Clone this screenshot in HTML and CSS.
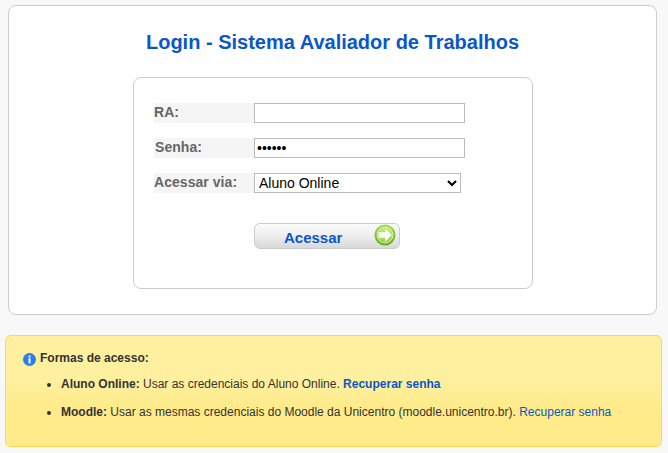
FILE: index.html
```html
<!DOCTYPE html>
<html lang="pt-BR">

<head>
    <meta charset="UTF-8">
    <title>Login - Sistema Avaliador de Trabalhos</title>
    <link rel="stylesheet" href="styles.css">
</head>

<body>

    <div class="login-card">
        <h1>Login - Sistema Avaliador de Trabalhos</h1>
        <form class="login-box">
            <div class="row">
                <label class="row-label" for="ra">RA:</label>
                <input type="text" id="ra" class="field">
            </div>
            <div class="row">
                <label class="row-label label-senha" for="senha">Senha:</label>
                <input type="password" id="senha" class="field" value="123456">
            </div>
            <div class="row">
                <label class="row-label" for="via">Acessar via:</label>
                <select id="via" class="field field-select">
                    <option>Aluno Online</option>
                    <option>Moodle</option>
                </select>
            </div>
            <button type="button" class="btn-acessar">
                <span class="btn-text">Acessar</span>
                <svg class="btn-icon" width="22" height="22" viewBox="0 0 22 22">
                    <defs>
                        <linearGradient id="ringGrad" x1="0" y1="0" x2="0" y2="1">
                            <stop offset="0" stop-color="#a6dc4a"/>
                            <stop offset="1" stop-color="#5fae1c"/>
                        </linearGradient>
                        <linearGradient id="coreGrad" x1="0" y1="0" x2="0" y2="1">
                            <stop offset="0" stop-color="#c4ec80"/>
                            <stop offset="1" stop-color="#96d13c"/>
                        </linearGradient>
                    </defs>
                    <circle cx="11" cy="11" r="10.5" fill="url(#ringGrad)"/>
                    <circle cx="11" cy="11" r="8" fill="url(#coreGrad)" stroke="#e8f7c8" stroke-width="0.8"/>
                    <path d="M4.5 8h6.5v-4l7 7-7 7v-4h-6.5z" fill="#fbfbf2" stroke="#b9c99a" stroke-width="0.4"/>
                </svg>
            </button>
        </form>
    </div>

    <div class="info-box">
        <p class="info-title">
            <svg class="info-icon" width="13" height="13" viewBox="0 0 13 13">
                <circle cx="6.5" cy="6.5" r="6.5" fill="#2b7de9"/>
                <rect x="5.5" y="5.4" width="2" height="5" fill="#fff"/>
                <rect x="5.5" y="2.6" width="2" height="1.9" fill="#fff"/>
            </svg>
            <strong>Formas de acesso:</strong>
        </p>
        <ul>
            <li><strong>Aluno Online:</strong> Usar as credenciais do Aluno Online. <a class="link-bold" href="#">Recuperar senha</a></li>
            <li><strong>Moodle:</strong> Usar as mesmas credenciais do Moodle da Unicentro (moodle.unicentro.br). <a href="#">Recuperar senha</a></li>
        </ul>
    </div>

</body>

</html>
```
FILE: styles.css
```css
body {
    margin: 0;
    padding: 5px 6px 0 5px;
    background-color: #f8f8f8;
    font-family: "Liberation Sans", Arial, sans-serif;
    color: #333;
}

.login-card {
    box-sizing: border-box;
    height: 310px;
    margin: 0 5px 20px 3px;
    padding-top: 22px;
    background-color: #fff;
    border: 1px solid #ccc;
    border-radius: 8px;
}

h1 {
    margin: 0 0 21px;
    font-size: 20px;
    line-height: 28px;
    text-align: center;
    color: #0b57c9;
}

.login-box {
    box-sizing: border-box;
    width: 400px;
    height: 212px;
    margin: 0 123px 0 124px;
    padding: 25px 20px 0;
    border: 1px solid #ccc;
    border-radius: 8px;
}

.row {
    display: flex;
    height: 20px;
    margin-bottom: 15px;
}

.row-label {
    box-sizing: border-box;
    width: 100px;
    height: 20px;
    background-color: #f5f5f5;
    font-size: 14px;
    font-weight: bold;
    line-height: 18px;
    letter-spacing: 0.05px;
    color: #666;
}

.label-senha {
    padding-left: 1px;
}

.field {
    box-sizing: border-box;
    width: 211px;
    height: 20px;
    padding: 1px 2px;
    background-color: #fff;
    border: 1px solid #bbb;
    border-radius: 0;
    font-family: "Liberation Sans", Arial, sans-serif;
    font-size: 14px;
    color: #000;
}

.field-select {
    width: 207px;
    padding: 0;
}

.btn-acessar {
    display: flex;
    align-items: center;
    box-sizing: border-box;
    width: 146px;
    height: 26px;
    margin: 30px 0 0 100px;
    padding: 0 3px 0 29px;
    background: linear-gradient(to bottom, #fbfbfb 0%, #f0f0f0 45%, #d8d8d8 100%);
    border: 1px solid #ccc;
    border-radius: 6px;
    cursor: pointer;
}

.btn-text {
    flex: 1;
    padding-top: 2px;
    text-align: left;
    font-family: "Liberation Sans", Arial, sans-serif;
    font-size: 15px;
    font-weight: bold;
    color: #0b57c9;
}

.btn-icon {
    margin-bottom: 2px;
}

.info-box {
    box-sizing: border-box;
    height: 112px;
    padding: 14px 17px 0;
    background: linear-gradient(to bottom, #fff0a0 0%, #fff0a0 40%, #ffeb8a 65%, #ffeb8a 100%);
    border: 1px solid #f9dc4a;
    border-radius: 6px;
    font-size: 12px;
    line-height: 16px;
}

.info-title {
    display: flex;
    align-items: center;
    gap: 4px;
    margin: 0 0 10px;
}

.info-icon {
    margin-top: 2px;
}

ul {
    margin: 0;
    padding-left: 38px;
}

li {
    margin-bottom: 12px;
}

a {
    color: #0b57c9;
    text-decoration: none;
}

.link-bold {
    font-weight: bold;
}
```
